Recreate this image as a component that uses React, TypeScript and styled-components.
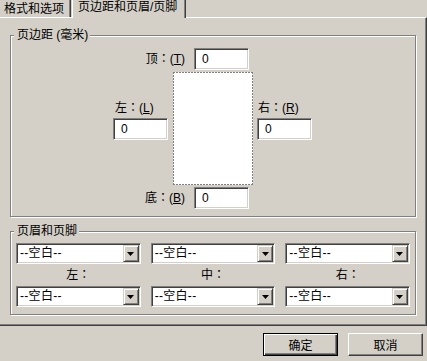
import React from "react";
import styled, { createGlobalStyle, css } from "styled-components";

const FACE = "#d4d0c8";
const SHADOW = "#808080";
const DARK = "#404040";

const GlobalStyle = createGlobalStyle`
  html, body { margin: 0; padding: 0; background: ${FACE}; }
  body {
    font-family: "Liberation Sans", "Noto Sans CJK SC", sans-serif;
    font-size: 12px;
    color: #000;
  }
`;

// labels with a centred full-width colon
const colonFont = `"Liberation Sans", "Noto Sans CJK JP", sans-serif`;

const Dialog = styled.div`
  width: 427px;
  height: 361px;
  background: ${FACE};
  display: flex;
  flex-direction: column;
  overflow: hidden;
`;

const TabStrip = styled.div`
  display: flex;
  height: 17px;
`;

const Tab = styled.div<{ $active?: boolean }>`
  position: relative;
  box-sizing: border-box;
  white-space: nowrap;
  line-height: 12px;
  border-right: 1px solid ${DARK};
  box-shadow: inset -1px 0 0 ${SHADOW};
  ${(p) =>
    p.$active
      ? css`
          width: 114px;
          height: 18px;
          margin: 0 0 -1px 1px;
          padding: 1px 0 0 5px;
          border-left: 1px solid #fff;
          background: ${FACE};
          z-index: 1;
        `
      : css`
          width: 71px;
          padding: 3px 0 0 4px;
        `}
`;

const Panel = styled.div`
  box-sizing: border-box;
  height: 309px;
  border-top: 1px solid #fff;
  border-right: 1px solid ${DARK};
  border-bottom: 1px solid ${DARK};
  box-shadow: inset -1px -1px 0 ${SHADOW};
  padding: 17px 10px 0 10px;
  display: flex;
  flex-direction: column;
`;

const GroupBox = styled.div<{ $height: number; $gap?: number }>`
  position: relative;
  box-sizing: border-box;
  height: ${(p) => p.$height}px;
  margin-top: ${(p) => p.$gap || 0}px;
  border: 1px solid ${SHADOW};
  box-shadow: inset 1px 1px 0 #fff, 1px 1px 0 #fff;
`;

const Legend = styled.span`
  position: absolute;
  top: -8px;
  left: 3px;
  padding: 0 2px 0 3px;
  background: ${FACE};
  line-height: 14px;
  white-space: nowrap;
`;

const MarginGrid = styled.div`
  display: grid;
  grid-template-columns: 56px 80px 55px;
  grid-template-rows: 22px 113px 22px;
  column-gap: 4px;
  row-gap: 2px;
  padding: 12px 0 0 102px;
`;

const EdgeRow = styled.div<{ $row: number }>`
  grid-column: 1 / 3;
  grid-row: ${(p) => p.$row};
  display: flex;
  justify-content: flex-end;
  align-items: center;
  gap: 9px;
  padding-right: 4px;
`;

const SideCell = styled.div<{ $col: number }>`
  grid-column: ${(p) => p.$col};
  grid-row: 2;
  display: flex;
  flex-direction: column;
  gap: 3px;
  padding-top: 29px;
`;

const Label = styled.span<{ $indent?: number }>`
  font-family: ${colonFont};
  line-height: 14px;
  white-space: nowrap;
  padding-left: ${(p) => p.$indent || 0}px;
`;

const dash = (dir: string) =>
  `repeating-linear-gradient(${dir}, ${SHADOW} 0 2px, transparent 2px 3px)`;

const PagePreview = styled.div`
  grid-column: 2;
  grid-row: 2;
  background:
    ${dash("90deg")} top / 100% 1px no-repeat,
    ${dash("90deg")} bottom / 100% 1px no-repeat,
    ${dash("180deg")} left / 1px 100% no-repeat,
    ${dash("180deg")} right / 1px 100% no-repeat,
    #fff;
`;

const sunken = css`
  box-sizing: border-box;
  background: #fff;
  border-style: solid;
  border-width: 1px;
  border-color: ${SHADOW} #fff #fff ${SHADOW};
  box-shadow: inset 1px 1px 0 ${DARK}, inset -1px -1px 0 ${FACE};
`;

const NumberField = styled.input`
  ${sunken};
  width: 55px;
  height: 22px;
  margin: 0;
  padding: 0 0 0 7px;
  font: inherit;
  color: #000;
  outline: none;
`;

const HeaderGrid = styled.div`
  display: grid;
  grid-template-columns: repeat(3, 1fr);
  grid-template-rows: 21px 22px 21px;
  column-gap: 10px;
  padding: 11px 5px 0 5px;
`;

const Combo = styled.div`
  ${sunken};
  height: 21px;
  display: flex;
  align-items: center;
  padding: 1px;
`;

const ComboText = styled.span`
  flex: 1;
  padding-left: 2px;
  line-height: 17px;
  white-space: nowrap;
  letter-spacing: 0.3px;
`;

const DropButton = styled.span`
  box-sizing: border-box;
  width: 16px;
  height: 17px;
  display: flex;
  align-items: center;
  justify-content: center;
  background: ${FACE};
  border-style: solid;
  border-width: 1px;
  border-color: ${FACE} ${DARK} ${DARK} ${FACE};
  box-shadow: inset 1px 1px 0 #fff, inset -1px -1px 0 ${SHADOW};
`;

const PosLabel = styled.span`
  font-family: ${colonFont};
  text-align: center;
  line-height: 22px;
`;

const ButtonBar = styled.div`
  display: flex;
  justify-content: flex-end;
  gap: 10px;
  padding: 7px 4px 0 0;
`;

const Button = styled.button<{ $default?: boolean }>`
  box-sizing: border-box;
  width: 75px;
  height: 23px;
  padding: 0;
  background: ${FACE};
  font: inherit;
  color: #000;
  border-style: solid;
  border-width: 1px;
  ${(p) =>
    p.$default
      ? css`
          border-color: #000;
          box-shadow: inset 1px 1px 0 #fff, inset -1px -1px 0 ${DARK},
            inset -2px -2px 0 ${SHADOW};
        `
      : css`
          border-color: #fff ${DARK} ${DARK} #fff;
          box-shadow: inset -1px -1px 0 ${SHADOW};
        `}
`;

function Arrow() {
  return (
    <svg width="7" height="4" viewBox="0 0 7 4">
      <path d="M0 0h7L3.5 4z" fill="#000" />
    </svg>
  );
}

function Select() {
  return (
    <Combo>
      <ComboText>--空白--</ComboText>
      <DropButton>
        <Arrow />
      </DropButton>
    </Combo>
  );
}

export default function App() {
  return (
    <Dialog>
      <GlobalStyle />
      <TabStrip>
        <Tab>格式和选项</Tab>
        <Tab $active>页边距和页眉/页脚</Tab>
      </TabStrip>
      <Panel>
        <GroupBox $height={182}>
          <Legend>页边距 (毫米)</Legend>
          <MarginGrid>
            <EdgeRow $row={1}>
              <Label>
                顶：(<u>T</u>)
              </Label>
              <NumberField readOnly value="0" />
            </EdgeRow>
            <SideCell $col={1}>
              <Label $indent={2}>
                左：(<u>L</u>)
              </Label>
              <NumberField readOnly value="0" />
            </SideCell>
            <PagePreview />
            <SideCell $col={3}>
              <Label $indent={1}>
                右：(<u>R</u>)
              </Label>
              <NumberField readOnly value="0" />
            </SideCell>
            <EdgeRow $row={3}>
              <Label>
                底：(<u>B</u>)
              </Label>
              <NumberField readOnly value="0" />
            </EdgeRow>
          </MarginGrid>
        </GroupBox>
        <GroupBox $height={84} $gap={14}>
          <Legend>页眉和页脚</Legend>
          <HeaderGrid>
            <Select />
            <Select />
            <Select />
            <PosLabel>左：</PosLabel>
            <PosLabel>中：</PosLabel>
            <PosLabel>右：</PosLabel>
            <Select />
            <Select />
            <Select />
          </HeaderGrid>
        </GroupBox>
      </Panel>
      <ButtonBar>
        <Button $default>确定</Button>
        <Button>取消</Button>
      </ButtonBar>
    </Dialog>
  );
}
